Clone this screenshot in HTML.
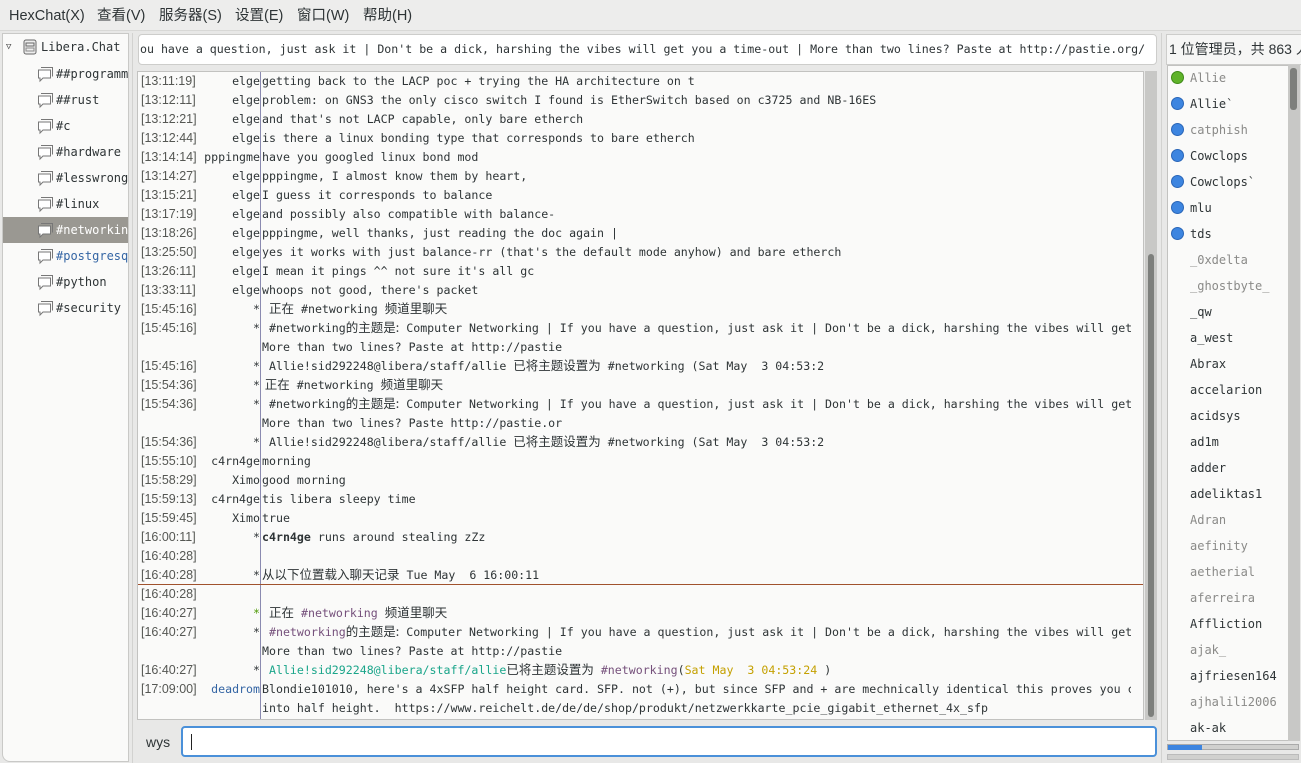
<!DOCTYPE html>
<html><head><meta charset="utf-8"><style>
*{box-sizing:border-box;margin:0;padding:0}
body{width:1301px;height:763px;overflow:hidden;background:#e8e8e7;font-family:"Liberation Sans","Noto Sans CJK SC",sans-serif;font-size:13px;color:#2e3436;position:relative}
.abs{position:absolute}
.menu{left:0;top:0;width:1301px;height:31px;background:#ededec;border-bottom:1px solid #d8d8d6}
.menu span{position:absolute;top:6px;height:20px;line-height:20px;font-size:14.5px;color:#2e3436}
.tree{left:2px;top:33px;width:127px;height:729px;background:#fafaf9;border:1px solid #c9c9c7;border-bottom-left-radius:8px;overflow:hidden}
.tr{position:absolute;left:0;width:126px;height:26px;font-family:"DejaVu Sans Mono",monospace;font-size:12px;line-height:26px;white-space:nowrap;overflow:hidden}
.vsep{background:#d2d2d0}
.topic{left:138px;top:34px;width:1019px;height:31px;background:#fff;border:1px solid #cdcdcb;border-radius:4px;font-family:"DejaVu Sans Mono",monospace;font-size:11.6px;line-height:29px;white-space:nowrap;overflow:hidden;padding-left:0}
.chat{left:137px;top:71px;width:1007px;height:649px;background:#fafaf9;border:1px solid #c2c2c0;overflow:hidden}
.row{position:absolute;left:0;height:19px;width:1006px;line-height:19px;white-space:nowrap;overflow:hidden}
.ts{position:absolute;left:3px;top:0;color:#555753;font-size:12.5px;line-height:19px}
.nk{position:absolute;top:0;right:884px;text-align:right;font-family:"DejaVu Sans Mono",monospace;font-size:11.6px;line-height:19px;color:#2e3436}
.tx{position:absolute;top:0;left:124px;width:869px;height:19px;line-height:19px;overflow:hidden;font-family:"DejaVu Sans Mono","Noto Sans CJK SC",monospace;font-size:11.6px;color:#2e3436}
.cj{font-family:"Noto Sans CJK SC",sans-serif;font-size:12.5px;line-height:1}
.pu{color:#75507b}.gr{color:#4e9a06}.te{color:#1aa58a}.ye{color:#c4a000}.bl{color:#3465a4}
.ul{left:1167px;top:65px;width:122px;height:676px;background:#fafaf9;border:1px solid #c2c2c0;overflow:hidden}
.u{position:absolute;left:22px;font-family:"DejaVu Sans Mono",monospace;font-size:12px;height:26px;line-height:26px;color:#2e3436}
.u.g{color:#8a8a88}
.dot{position:absolute;left:3px;width:13px;height:13px;border-radius:50%;background:#3d85e0;border:1px solid #2a66b8}
</style></head><body>
<div class="abs menu">
<span style="left:9px">HexChat(X)</span><span style="left:97px">查看(V)</span><span style="left:159px">服务器(S)</span><span style="left:235px">设置(E)</span><span style="left:297px">窗口(W)</span><span style="left:363px">帮助(H)</span>
</div>

<div class="abs tree">
<div class="tr" style="top:0"><span style="position:absolute;left:3px;top:0;font-size:9px;color:#444">▽</span>
<svg class="abs" style="left:20px;top:5px" width="14" height="16" viewBox="0 0 14 16"><rect x="1" y="1" width="12" height="14" rx="2" fill="#eee" stroke="#666"/><rect x="3" y="4" width="8" height="3" fill="none" stroke="#666"/><rect x="3" y="9" width="8" height="3" fill="none" stroke="#888"/></svg>
<span style="position:absolute;left:38px">Libera.Chat</span></div>
</div>
<div id="chans"></div>

<div class="abs vsep" style="left:132px;top:33px;width:1px;height:730px"></div>

<div class="abs topic"><span style="margin-left:1px">ou have a question, just ask it | Don't be a dick, harshing the vibes will get you a time-out | More than two lines? Paste at http://pastie.org/</span></div>

<div class="abs chat" id="chat">
<div class="abs" style="left:122px;top:0;width:1px;height:649px;background:#8a8ab0"></div>
<div class="abs" style="left:0;top:512px;width:1006px;height:1px;background:#a0522d"></div>
</div>
<div class="abs" style="left:1145px;top:71px;width:12px;height:649px;background:#c8c8c6"></div>
<div class="abs" style="left:1148px;top:254px;width:6px;height:463px;background:#7d7f7c;border-radius:3px"></div>

<div class="abs" style="left:146px;top:734px;font-size:14px;color:#2e3436">wys</div>
<div class="abs" style="left:181px;top:726px;width:976px;height:31px;background:#fff;border:2px solid #4a90d9;border-radius:4px"><div class="abs" style="left:8px;top:6px;width:1px;height:16px;background:#222"></div></div>

<div class="abs vsep" style="left:1161px;top:33px;width:1px;height:730px"></div>
<div class="abs" style="left:1166px;top:34px;width:140px;height:31px;background:#f6f6f5;border:1px solid #cdcdcb;font-size:14px;line-height:29px;padding-left:2px;white-space:nowrap;overflow:hidden">1 位管理员，共 863 人</div>
<div class="abs ul" id="ul"></div>
<div class="abs" style="left:1288px;top:65px;width:12px;height:676px;background:#c8c8c6"></div>
<div class="abs" style="left:1290px;top:68px;width:7px;height:42px;background:#7d7f7c;border-radius:3px"></div>
<div class="abs" style="left:1167px;top:744px;width:132px;height:6px;background:#d0d0ce;border:1px solid #aaa"></div>
<div class="abs" style="left:1168px;top:745px;width:34px;height:5px;background:#3d85e0"></div>
<div class="abs" style="left:1167px;top:754px;width:132px;height:6px;background:#d0d0ce;border:1px solid #bbb"></div>

<script>
var ch=["##programming","##rust","#c","#hardware","#lesswrong","#linux","#networking","#postgresql","#python","#security"];
var h='';
ch.forEach(function(c,i){var t=33+26*(i+1);var sel=c=="#networking";
h+='<div class="abs" style="left:3px;top:'+(t+2)+'px;width:125px;height:26px;'+(sel?'background:#9a9892;':'')+'overflow:hidden;font-family:DejaVu Sans Mono,monospace;font-size:12px;line-height:26px;white-space:nowrap;color:'+(sel?'#fff':(c=="#postgresql"?'#3465a4':'#2e3436'))+'">'+
'<svg style="position:absolute;left:32px;top:4px" width="20" height="18" viewBox="0 0 20 18"><path d="M6 2.5h11.5v9" fill="none" stroke="#777"/><path d="M3.5 5h12v8H8l-3 3v-3H3.5z" fill="#fff" stroke="#777"/></svg>'+
'<span style="position:absolute;left:53px">'+c+'</span></div>';});
document.getElementById('chans').innerHTML=h;

var C='<span class="cj">',E='</span>';
var R=[
["13:11:19","elge","getting back to the LACP poc + trying the HA architecture on t"],
["13:12:11","elge","problem: on GNS3 the only cisco switch I found is EtherSwitch based on c3725 and NB-16ES"],
["13:12:21","elge","and that's not LACP capable, only bare etherch"],
["13:12:44","elge","is there a linux bonding type that corresponds to bare etherch"],
["13:14:14","pppingme","have you googled linux bond mod"],
["13:14:27","elge","pppingme, I almost know them by heart,"],
["13:15:21","elge","I guess it corresponds to balance"],
["13:17:19","elge","and possibly also compatible with balance-"],
["13:18:26","elge","pppingme, well thanks, just reading the doc again |"],
["13:25:50","elge","yes it works with just balance-rr (that's the default mode anyhow) and bare etherch"],
["13:26:11","elge","I mean it pings ^^ not sure it's all gc"],
["13:33:11","elge","whoops not good, there's packet"],
["15:45:16","*"," "+C+"正在"+E+" #networking "+C+"频道里聊天"+E],
["15:45:16","*"," #networking"+C+"的主题是:"+E+" Computer Networking | If you have a question, just ask it | Don't be a dick, harshing the vibes will get"],
["","","More than two lines? Paste at http://pastie"],
["15:45:16","*"," Allie!sid292248@libera/staff/allie "+C+"已将主题设置为"+E+" #networking (Sat May  3 04:53:2"],
["15:54:36","*",""+C+" 正在"+E+" #networking "+C+"频道里聊天"+E],
["15:54:36","*"," #networking"+C+"的主题是:"+E+" Computer Networking | If you have a question, just ask it | Don't be a dick, harshing the vibes will get"],
["","","More than two lines? Paste http://pastie.or"],
["15:54:36","*"," Allie!sid292248@libera/staff/allie "+C+"已将主题设置为"+E+" #networking (Sat May  3 04:53:2"],
["15:55:10","c4rn4ge","morning"],
["15:58:29","Ximo","good morning"],
["15:59:13","c4rn4ge","tis libera sleepy time"],
["15:59:45","Ximo","true"],
["16:00:11","*","<b>c4rn4ge</b> runs around stealing zZz"],
["16:40:28","",""],
["16:40:28","*",C+"从以下位置载入聊天记录"+E+" Tue May  6 16:00:11"],
["16:40:28","",""],
["16:40:27","<span class='gr'>*</span>"," "+C+"正在"+E+" <span class='pu'>#networking</span> "+C+"频道里聊天"+E],
["16:40:27","*"," <span class='pu'>#networking</span>"+C+"的主题是:"+E+" Computer Networking | If you have a question, just ask it | Don't be a dick, harshing the vibes will get"],
["","","More than two lines? Paste at http://pastie"],
["16:40:27","*"," <span class='te'>Allie!sid292248@libera/staff/allie</span>"+C+"已将主题设置为"+E+" <span class='pu'>#networking</span>(<span class='ye'>Sat May  3 04:53:24 </span>)"],
["17:09:00","<span class='bl'>deadrom</span>","Blondie101010, here's a 4xSFP half height card. SFP. not (+), but since SFP and + are mechnically identical this proves you c"],
["","","into half height.  https://www.reichelt.de/de/de/shop/produkt/netzwerkkarte_pcie_gigabit_ethernet_4x_sfp"]
];
var o='';
R.forEach(function(r,i){var t=19*i;
o+='<div class="row" style="top:'+t+'px"><span class="ts">'+(r[0]?'['+r[0]+']':'')+'</span><span class="nk">'+r[1]+'</span><span class="tx" style="white-space:pre">'+r[2]+'</span></div>';});
document.getElementById('chat').insertAdjacentHTML('beforeend',o);

var U=[["Allie","g","green"],["Allie`","","blue"],["catphish","g","blue"],["Cowclops","","blue"],["Cowclops`","","blue"],["mlu","","blue"],["tds","","blue"],["_0xdelta","g"],["_ghostbyte_","g"],["_qw",""],["a_west",""],["Abrax",""],["accelarion",""],["acidsys",""],["ad1m",""],["adder",""],["adeliktas1",""],["Adran","g"],["aefinity","g"],["aetherial","g"],["aferreira","g"],["Affliction",""],["ajak_","g"],["ajfriesen164",""],["ajhalili2006","g"],["ak-ak",""]];
var u='';
U.forEach(function(x,i){var t=26*i-1;
if(x[2])u+='<div class="dot" style="top:'+(t+6)+'px;'+(x[2]=='green'?'background:#5fb32a;border-color:#3f8a18':'')+'"></div>';
u+='<div class="u '+x[1]+'" style="top:'+t+'px">'+x[0]+'</div>';});
document.getElementById('ul').innerHTML=u;
</script>
</body></html>
